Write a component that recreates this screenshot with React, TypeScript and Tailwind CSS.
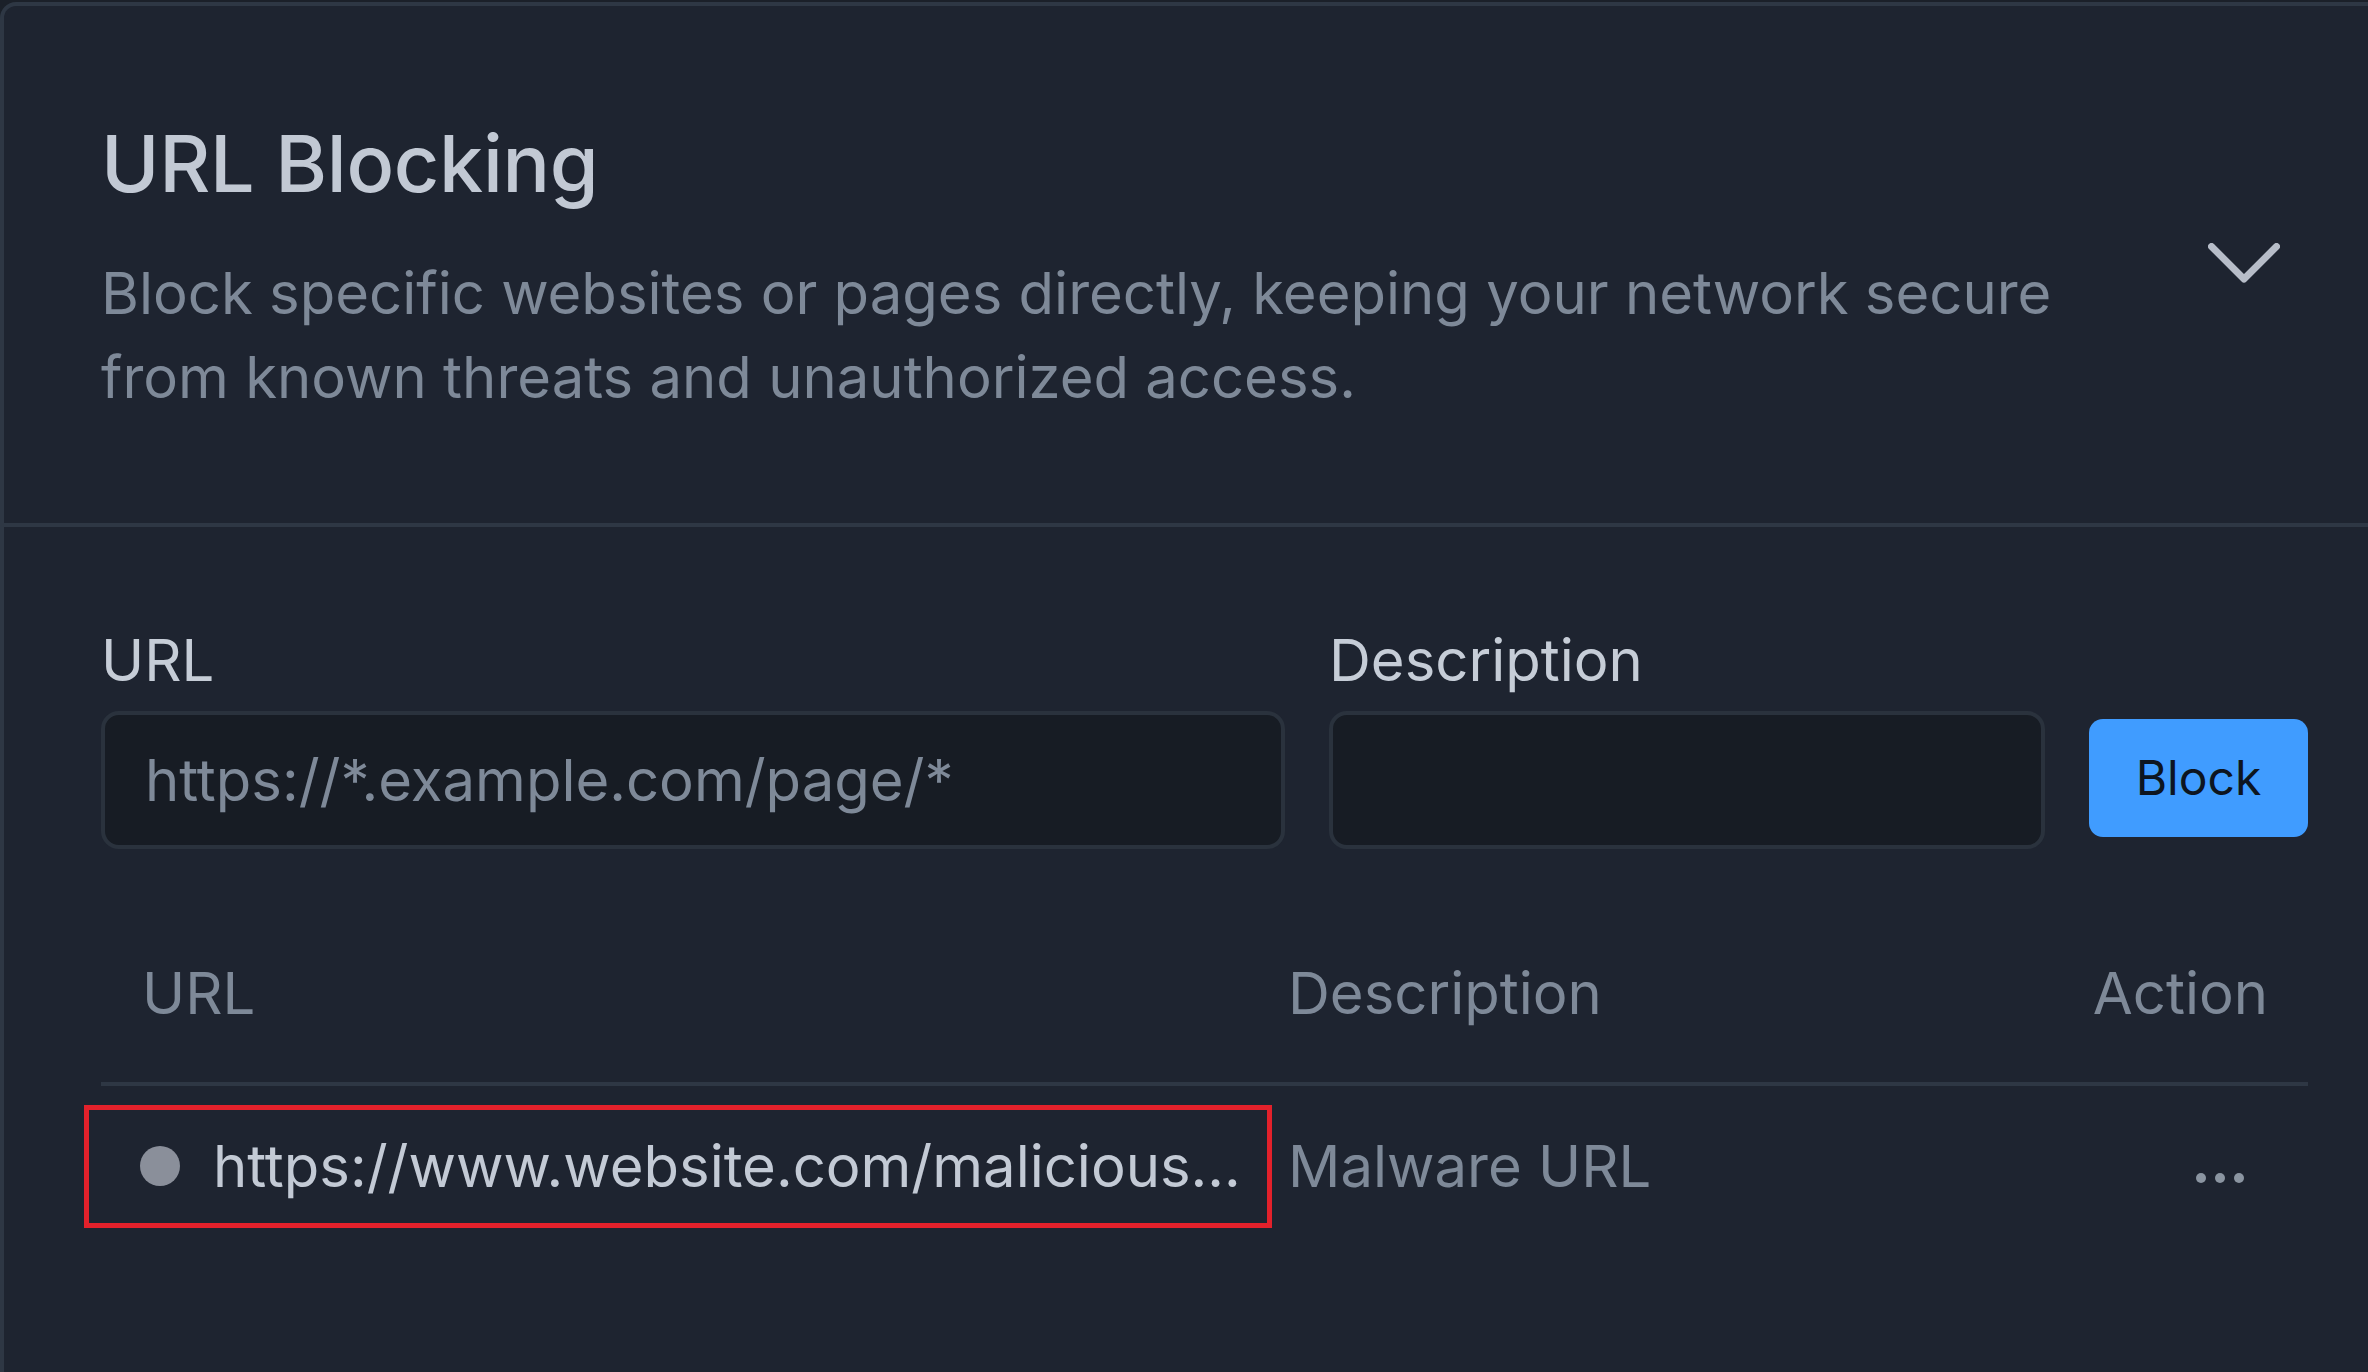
import React from "react";

export default function App() {
  return (
    <div
      className="w-[2368px] h-[1372px] overflow-hidden bg-[#1b2029] pt-[2px]"
      style={{ fontFamily: "Inter, 'Noto Sans', sans-serif" }}
    >
      <div className="w-[2409px] min-h-[1420px] bg-[#1e2430] border-t-4 border-l-4 border-r-4 border-[#2e3744] rounded-t-[16px]">
        {/* Header */}
        <div className="flex items-center justify-between pl-[97px] pr-[125px] pt-[101px] pb-[104px] border-b-4 border-[#2e3744]">
          <div className="flex flex-col">
            <h2 className="text-[79px] leading-[112px] font-medium text-[#c2c9d4] tracking-[-0.3px]">
              URL Blocking
            </h2>
            <p className="mt-[32px] text-[58px] leading-[84px] text-[#7e8998] whitespace-nowrap">
              Block specific websites or pages directly, keeping your network secure
              <br />
              from known threats and unauthorized access.
            </p>
          </div>
          <svg
            width="72"
            height="40"
            viewBox="0 0 72 40"
            fill="none"
            className="shrink-0"
          >
            <polyline
              points="3.5,3.5 36,36 68.5,3.5"
              stroke="#b7bdc8"
              strokeWidth="7"
              strokeLinecap="round"
              strokeLinejoin="round"
            />
          </svg>
        </div>

        {/* Body */}
        <div className="pl-[97px] pr-[97px] pt-[91px]">
          <div className="flex items-end gap-[44px]">
            <div className="w-[1184px] flex flex-col">
              <label className="text-[58px] leading-[84px] text-[#c6cdd7]">URL</label>
              <div className="mt-[9px] h-[138px] rounded-[18px] border-4 border-[#2a323d] bg-[#171c24] flex items-center px-[40px]">
                <span className="text-[58px] leading-[84px] text-[#7e8998] whitespace-nowrap">
                  https://*.example.com/page/*
                </span>
              </div>
            </div>
            <div className="w-[716px] flex flex-col">
              <label className="text-[58px] leading-[84px] text-[#c6cdd7]">Description</label>
              <div className="mt-[9px] h-[138px] rounded-[18px] border-4 border-[#2a323d] bg-[#171c24]" />
            </div>
            <button className="w-[219px] h-[118px] mb-[12px] rounded-[14px] bg-[#409cff] text-[48px] leading-none text-[#0d1520] flex items-center justify-center">
              Block
            </button>
          </div>

          {/* Table */}
          <div className="mt-[102px]">
            <div className="flex items-center pb-[47px] border-b-4 border-[#2e3744] text-[58px] leading-[84px] text-[#7e8998]">
              <div className="w-[1187px] pl-[41px]">URL</div>
              <div className="flex-1">Description</div>
              <div className="pr-[40px]">Action</div>
            </div>
            <div className="relative flex items-center h-[160px] text-[58px] leading-[84px]">
              <div className="absolute left-[-17px] top-[19px] w-[1188px] h-[123px] border-[5px] border-[#e3212b] pointer-events-none" />
              <div className="w-[1187px] pl-[39px] flex items-center">
                <span className="w-[40px] h-[40px] rounded-full bg-[#8a8f9a] shrink-0" />
                <span className="ml-[33px] text-[#c3cad5] whitespace-nowrap">
                  https://www.website.com/malicious...
                </span>
              </div>
              <div className="flex-1 text-[#7e8998] whitespace-nowrap">Malware URL</div>
              <div className="pr-[64px] flex items-center gap-[9px] mt-[24px]">
                <span className="w-[10px] h-[10px] rounded-full bg-[#8b95a1]" />
                <span className="w-[10px] h-[10px] rounded-full bg-[#8b95a1]" />
                <span className="w-[10px] h-[10px] rounded-full bg-[#8b95a1]" />
              </div>
            </div>
          </div>
        </div>
      </div>
    </div>
  );
}
